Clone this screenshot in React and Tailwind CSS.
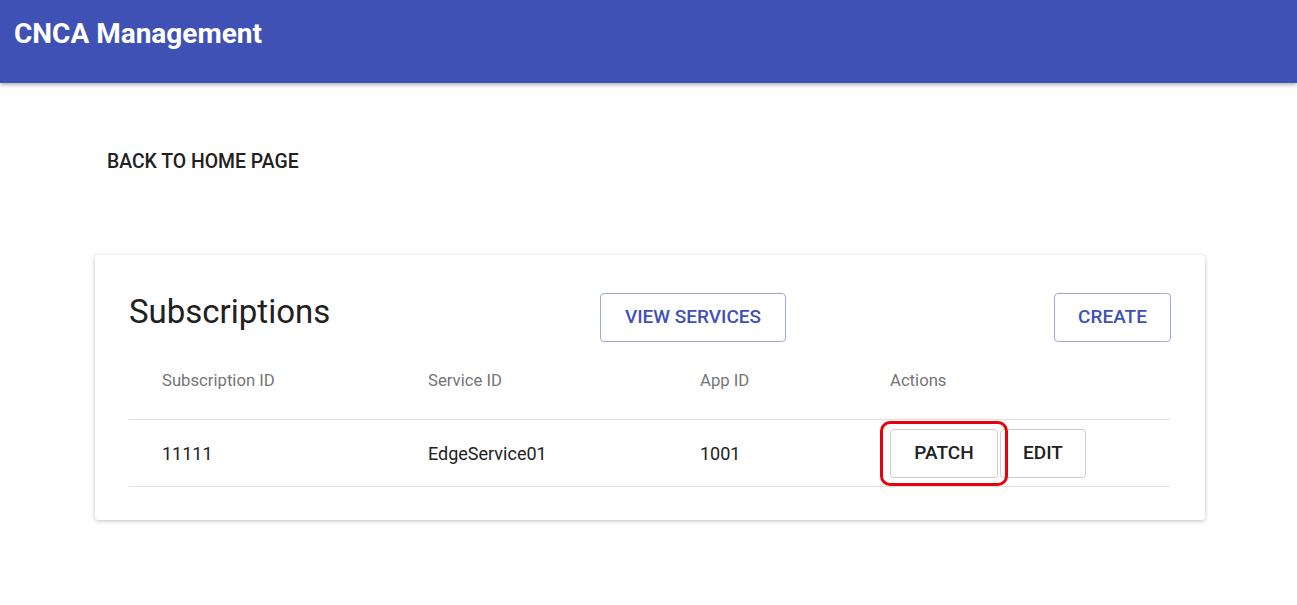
export default function App() {
  const rows = [{ sub: "11111", service: "EdgeService01", app: "1001" }];

  return (
    <div className="min-h-screen bg-white font-['Roboto',sans-serif]">
      {/* App bar */}
      <div className="h-[83px] bg-[#3f51b5] shadow-[0_2px_4px_rgba(0,0,0,0.3)] flex items-start pt-[17px] px-[14px]">
        <h1 className="text-[28px] font-bold text-white leading-[34px]">CNCA Management</h1>
      </div>

      <div className="px-[95px] pt-[64px]">
        <button className="ml-[12px] text-[19.4px] font-medium text-[#212121] uppercase leading-[30px]">
          Back to home page
        </button>

        <div className="mt-[78px] w-[1110px] bg-white rounded-[4px] shadow-[0_1px_4px_rgba(0,0,0,0.25)] px-[34px] pt-[38px] pb-[33px]">
          {/* Card header */}
          <div className="flex items-center h-[49px]">
            <div className="w-[471px] text-[33px] text-[#212121] leading-none -mt-[12px]">Subscriptions</div>
            <button className="h-[49px] w-[186px] rounded-[4px] border border-[#9fa8da] text-[#3f51b5] text-[19px] font-medium uppercase">
              View services
            </button>
            <div className="flex-1" />
            <button className="h-[49px] w-[117px] rounded-[4px] border border-[#9fa8da] text-[#3f51b5] text-[19px] font-medium uppercase">
              Create
            </button>
          </div>

          {/* Table */}
          <div className="w-[1041px]">
            <div className="grid grid-cols-[266px_272px_190px_1fr] h-[78px] items-center border-b border-[#e0e0e0] text-[16.7px] text-[#757575]">
              <div className="pl-[33px]">Subscription ID</div>
              <div className="pl-[33px]">Service ID</div>
              <div className="pl-[33px]">App ID</div>
              <div className="pl-[33px]">Actions</div>
            </div>
            {rows.map((r) => (
              <div
                key={r.sub}
                className="grid grid-cols-[266px_272px_190px_1fr] h-[67px] items-center border-b border-[#e0e0e0] text-[18px] text-[#212121]"
              >
                <div className="pl-[33px]">{r.sub}</div>
                <div className="pl-[33px]">{r.service}</div>
                <div className="pl-[33px]">{r.app}</div>
                <div className="pl-[33px] flex items-center">
                  <div className="relative">
                    <button className="h-[49px] w-[108px] rounded-[4px] border border-[#cfcfcf] text-[19px] font-medium text-[#212121] uppercase">
                      Patch
                    </button>
                    <div className="absolute -left-[10px] -top-[8px] w-[128px] h-[65px] rounded-[10px] border-[3px] border-[#e8000b] pointer-events-none" />
                  </div>
                  <button className="ml-[2px] h-[49px] w-[86px] rounded-[4px] border border-[#cfcfcf] text-[19px] font-medium text-[#212121] uppercase">
                    Edit
                  </button>
                </div>
              </div>
            ))}
          </div>
        </div>
      </div>
    </div>
  );
}
